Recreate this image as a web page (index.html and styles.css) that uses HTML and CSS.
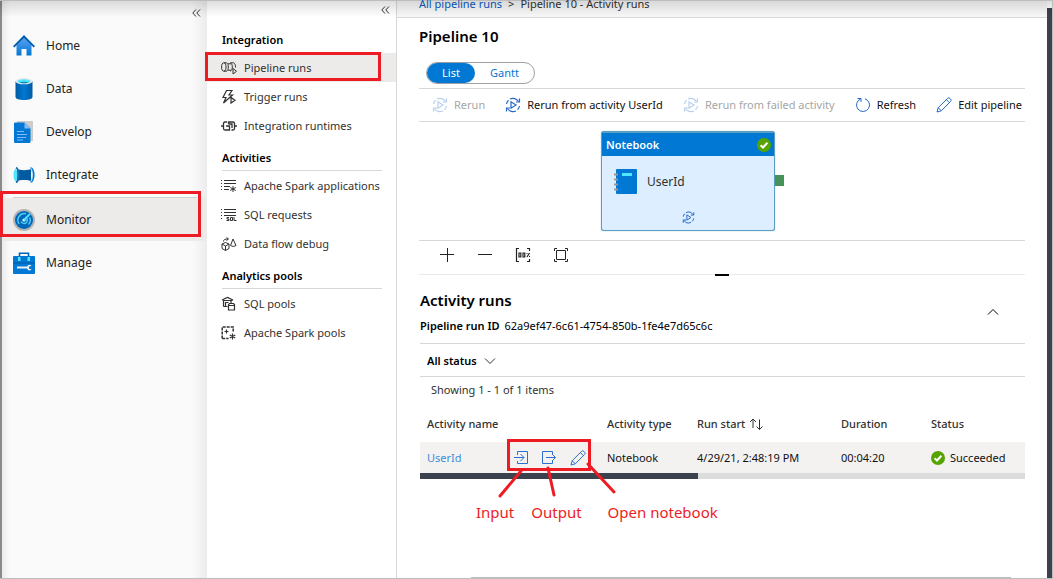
FILE: index.html
```html
<!DOCTYPE html>
<html lang="en">
<head>
<meta charset="utf-8">
<meta name="viewport" content="width=device-width, initial-scale=1">
<title>Pipeline 10 - Activity runs</title>
<link rel="stylesheet" href="styles.css">
</head>
<body>
<svg class="defs" width="0" height="0" aria-hidden="true">
  <defs>
    <linearGradient id="blue" x1="0" y1="0" x2="0" y2="1"><stop offset="0" stop-color="#5ea0ef"/><stop offset="1" stop-color="#0078d4"/></linearGradient>
    <linearGradient id="cyl" x1="0" y1="0" x2="1" y2="0"><stop offset="0" stop-color="#005ba1"/><stop offset=".5" stop-color="#0078d4"/><stop offset="1" stop-color="#005ba1"/></linearGradient>
    <symbol id="rerun" viewBox="0 0 16 16">
      <g fill="none" stroke="currentColor" stroke-width="1.200">
        <path d="M1.500 7A6.600 6.600 0 0 1 3.500 3.200M5 2a6.600 6.600 0 0 1 8.500 2.500M14.500 9a6.600 6.600 0 0 1-2 3.800M11 14a6.600 6.600 0 0 1-8.500-2.500"/>
        <path d="M14.500 1.500v3.500h-3.500M1.500 14.500V11H5"/>
        <path d="M6 4.800v6.400l5-3.200z"/>
      </g>
    </symbol>
    <symbol id="pencil" viewBox="0 0 16 16">
      <path d="M1 15l1.200-4.300L11.600 1.400a1.600 1.600 0 0 1 2.300 0l.7.7a1.600 1.600 0 0 1 0 2.300L5.300 13.800zM10.400 2.600l3 3M2.200 10.700l3.100 3.100" fill="none" stroke="currentColor"/>
    </symbol>
    <symbol id="ok" viewBox="0 0 14 14">
      <circle cx="7" cy="7" r="7" fill="#57a300"/><path d="M3.600 7.200l2.400 2.300 4.400-4.700" fill="none" stroke="#fff" stroke-width="2"/>
    </symbol>
    <symbol id="collapse" viewBox="0 0 9 8"><path d="M4 .5L.8 4 4 7.500M8 .5L4.800 4 8 7.500" fill="none" stroke="currentColor"/></symbol>
  </defs>
</svg>

<div class="app">
  <nav class="hub" aria-label="Hubs">
    <button class="collapse" type="button" aria-label="Collapse hubs"><svg width="9" height="8"><use href="#collapse"/></svg></button>
    <a class="hub-item" href="#">
      <svg width="22" height="22" viewBox="0 0 22 22"><path d="M3.500 10L11 2.500l7.500 7.500v10.500h-5V14h-5v6.500h-5z" fill="url(#blue)"/><path d="M0 11.200L11 0l11 11.200-1.300 1.300L11 3 1.300 12.500z" fill="#0060b0"/></svg>
      <span>Home</span></a>
    <a class="hub-item" href="#">
      <svg width="22" height="22" viewBox="0 0 22 22"><path d="M2.500 3v16c0 1.700 3.800 3 8.500 3s8.500-1.300 8.500-3V3z" fill="url(#cyl)"/><ellipse cx="11" cy="3.200" rx="8.500" ry="3.100" fill="#e8e8e8"/><ellipse cx="11" cy="3.300" rx="6.500" ry="2.100" fill="#50e6ff"/><path d="M6 4.600c2-1.300 8-1.300 10 0-2.500 1-7.500 1-10 0z" fill="#198ab3"/></svg>
      <span>Data</span></a>
    <a class="hub-item" href="#">
      <svg width="22" height="22" viewBox="0 0 22 22"><path d="M4 0h15a1 1 0 0 1 1 1v19H4z" fill="#ccc"/><path d="M2 1.500h9.500l6 6V21a1 1 0 0 1-1 1H2a1 1 0 0 1-1-1V2.500a1 1 0 0 1 1-1z" fill="#0078d4"/><path d="M11.500 1.500l6 6h-6z" fill="#83b9f9"/><path d="M4 10.500h7M4 13.500h10M4 16.500h9M4 19h6" stroke="#83b9f9"/></svg>
      <span>Develop</span></a>
    <a class="hub-item" href="#">
      <svg width="22" height="22" viewBox="0 0 22 22"><path d="M4 5c2 1.500 12 1.500 14 0v12c-2-1.500-12-1.500-14 0z" fill="#005ba1"/><ellipse cx="2.500" cy="11" rx="2" ry="6" fill="#50e6ff"/><path d="M3 3.500c3.500 2 3.500 13 0 15" fill="none" stroke="#1b6fb5" stroke-width="2"/><path d="M17 3.500h2c3.500 3 3.500 12 0 15h-2c3-3 3-12 0-15z" fill="#0078d4"/><path d="M18 4.500c2 3 2 10 0 13" fill="none" stroke="#bde3f5"/></svg>
      <span>Integrate</span></a>
    <div class="hub-current">
      <a class="hub-item active" href="#" aria-current="page">
        <svg width="22" height="22" viewBox="0 0 22 22"><circle cx="11" cy="11" r="11" fill="#b5b5b5"/><circle cx="11" cy="11" r="9" fill="#0067b8"/><path d="M6.200 15A6.500 6.500 0 0 1 13 4.800M16.700 8.500A6.500 6.500 0 0 1 15.500 15.500M8 12.500a3.300 3.300 0 1 0 4.300-4.400" fill="none" stroke="#50c8f5" stroke-width="1.500"/><circle cx="11" cy="11" r="1.600" fill="#fff"/><path d="M11 11l6-6.200" stroke="#50e6ff" stroke-width="1.800"/></svg>
        <span>Monitor</span></a>
      <span class="mark mark-hub"></span>
    </div>
    <a class="hub-item" href="#">
      <svg width="22" height="22" viewBox="0 0 22 22"><path d="M6.500 5V1.200h9V5" fill="none" stroke="#0067b8" stroke-width="1.600"/><rect y="4" width="22" height="18" rx="1" fill="#0078d4"/><path d="M0 11h22" stroke="#005ba1"/><rect x="5" y="5" width="2.500" height="4" fill="#50e6ff"/><rect x="14.500" y="5" width="2.500" height="4" fill="#50e6ff"/><path d="M4 15.500h10" stroke="#e8f2fa" stroke-width="2"/><path d="M18.500 14a2.600 2.600 0 1 0 0 3.200l-2.500-.4v-2.300z" fill="#e8f2fa"/></svg>
      <span>Manage</span></a>
  </nav>

  <nav class="side" aria-label="Monitor">
    <button class="collapse" type="button" aria-label="Collapse menu"><svg width="9" height="8"><use href="#collapse"/></svg></button>
    <h2>Integration</h2>
    <div class="side-current">
      <a class="side-item active" href="#" aria-current="page">
        <svg width="16" height="14" viewBox="0 0 16 14"><path d="M2.800 1.800C1 1.800.6 4 .6 6s.4 4.200 2.200 4.200S5 8 5 6 4.600 1.800 2.800 1.800zM3 1.800h2.500C7 2.500 7.300 4 7.300 6s-.3 3.500-1.800 4.200H3M7 2.800h3M7 9.200h3M9.500 1.800h3C14 2.500 14.500 4 14.500 6.500M9.500 1.800c1.500 1 1.800 2.500 1.800 4.200s-.3 3.200-1.800 4.200M12 7.500v5.500l3.500-2.700z" fill="none" stroke="currentColor"/></svg>
        <span>Pipeline runs</span></a>
      <span class="mark mark-side"></span>
    </div>
    <a class="side-item" href="#">
      <svg width="16" height="14" viewBox="0 0 16 14"><path d="M5.500.5h5.500L8 5h3.500L2.500 13l2.500-5.500H2zM10 7.500v5.500l4-2.700z" fill="none" stroke="currentColor" stroke-width="1.200"/></svg>
      <span>Trigger runs</span></a>
    <a class="side-item" href="#">
      <svg width="16" height="14" viewBox="0 0 16 14"><path d="M0 7h2.500M13.500 7H16M6 3H4a1.500 1.500 0 0 0-1.500 1.500v5A1.500 1.500 0 0 0 4 11h4.500V7H5M7.500 5V3H12a1.500 1.500 0 0 1 1.500 1.500v5A1.500 1.500 0 0 1 12 11h-1.500M7.500 5H11v4" fill="none" stroke="currentColor" stroke-width="1.300"/></svg>
      <span>Integration runtimes</span></a>
    <h2>Activities</h2>
    <a class="side-item" href="#">
      <svg width="16" height="14" viewBox="0 0 16 14"><path d="M0 1.500h1M3 1.500h12M0 4.500h1M3 4.500h12M0 7.500h1M3 7.500h6M0 10.500h1M3 10.500h5M12 7v6M9.200 8.500l5.600 3M14.800 8.500l-5.600 3" fill="none" stroke="currentColor"/></svg>
      <span>Apache Spark applications</span></a>
    <a class="side-item" href="#">
      <svg width="16" height="14" viewBox="0 0 16 14"><path d="M0 1.500h1M3 1.500h12M0 4.500h1M3 4.500h12M0 7.500h1M3 7.500h12M0 10.500h1M8 9.500H6v1.500h2v1.500H5.500M9.500 9.500h2v3h-2zM13 9v3.500h2.500" fill="none" stroke="currentColor"/></svg>
      <span>SQL requests</span></a>
    <a class="side-item" href="#">
      <svg width="16" height="14" viewBox="0 0 16 14"><path d="M1 7l3.500-1.500L8 7v4.500L4.500 13.500 1 11.500zM1 7l3.500 2L8 7M4.500 9v4.500M2.500 4.500C2.500 2.500 4 2 7 2M5.500.5L7.500 2l-2 1.500M12 2l3 6.500-2.800 1-2.700-1z" fill="none" stroke="currentColor"/></svg>
      <span>Data flow debug</span></a>
    <h2>Analytics pools</h2>
    <a class="side-item" href="#">
      <svg width="16" height="14" viewBox="0 0 16 14"><path d="M2.500 9.500v-6M2 3.500h9.500M1 3l5.500-2.500L12 3M4.500 9.500v-4h3M2.500 9.500h4M7.500 13V7.500l1-1h4l1 1V13zM7.500 8.500h6M10 4v2.500" fill="none" stroke="currentColor" stroke-width="1.200"/></svg>
      <span>SQL pools</span></a>
    <a class="side-item" href="#">
      <svg width="16" height="14" viewBox="0 0 16 14"><path d="M1.200 12.500V1h11v5M1.200 12.500H7.500" fill="none" stroke="currentColor" stroke-width="1.500" stroke-dasharray="3 1"/><path d="M5.500 3.500v4M3.500 5.500h4M11.500 7.500v6M8.700 9l5.600 3M14.300 9l-5.600 3" stroke="currentColor" stroke-width="1.200"/></svg>
      <span>Apache Spark pools</span></a>
  </nav>

  <main class="main">
    <div class="crumbs"><a href="#">All pipeline runs</a><span>&gt;</span><span>Pipeline 10 - Activity runs</span></div>
    <div class="content">
      <h1>Pipeline 10</h1>
      <div class="toggle"><button class="on" type="button">List</button><button type="button">Gantt</button></div>
      <div class="toolbar">
        <button type="button" disabled><svg width="16" height="16"><use href="#rerun"/></svg>Rerun</button>
        <button type="button"><svg width="16" height="16"><use href="#rerun"/></svg>Rerun from activity UserId</button>
        <button type="button" disabled><svg width="16" height="16"><use href="#rerun"/></svg>Rerun from failed activity</button>
        <button type="button"><svg width="16" height="16" viewBox="0 0 16 16"><path d="M10 1.800a6.500 6.500 0 1 1-4.500.2M2.500 1.500h3.500V5" fill="none" stroke="currentColor"/></svg>Refresh</button>
        <button type="button"><svg width="16" height="16"><use href="#pencil"/></svg>Edit pipeline</button>
      </div>

      <div class="canvas">
        <div class="node">
          <div class="node-head"><span>Notebook</span><svg width="14" height="14"><use href="#ok"/></svg></div>
          <div class="node-body"><svg width="23" height="25" viewBox="0 0 23 25"><rect x="2" width="21" height="25" rx="1" fill="#0078d4"/><rect x="8" y="4" width="10" height="3" fill="#50e6ff"/><path d="M0 5.500h4M0 10.500h4M0 15.500h4M0 20.500h4" stroke="#999" stroke-width="2"/></svg><span>UserId</span></div>
          <button class="node-run" type="button" aria-label="Rerun activity"><svg width="13" height="13"><use href="#rerun"/></svg></button>
          <span class="port"></span>
        </div>
      </div>
      <div class="zoombar">
        <button type="button" aria-label="Zoom in"><svg width="16" height="16" viewBox="0 0 16 16"><path d="M8.500 1v14M1 7.500h14" stroke="currentColor"/></svg></button>
        <button type="button" aria-label="Zoom out"><svg width="16" height="16" viewBox="0 0 16 16"><path d="M1 7.500h14" stroke="currentColor"/></svg></button>
        <button type="button" aria-label="Zoom to 100%"><svg width="16" height="16" viewBox="0 0 16 16"><path d="M4 1.500H1.500v13H4M12 1.500h2.500V4M14.500 12v2.500H12" fill="none" stroke="currentColor" stroke-width="1.200"/><path d="M4 6h1.800v4H4zM8 6h1.800v4H8zM11.500 6.500h1M14.500 6l-2.500 4M14 9.500h1" fill="none" stroke="currentColor" stroke-width="1.200"/></svg></button>
        <button type="button" aria-label="Zoom to fit"><svg width="16" height="16" viewBox="0 0 16 16"><path d="M1.500 4V1.500H4M12 1.500h2.500V4M14.500 12v2.500H12M4 14.500H1.500V12M3.500 3.500h9v9h-9z" fill="none" stroke="currentColor"/></svg></button>
        <span class="grip"></span>
      </div>

      <section class="runs">
        <div class="runs-head">
          <div><h2>Activity runs</h2><p><b>Pipeline run ID</b> <span>62a9ef47-6c61-4754-850b-1fe4e7d65c6c</span></p></div>
          <button type="button" aria-label="Collapse activity runs"><svg width="12" height="8" viewBox="0 0 12 8"><path d="M1 6.500l5-5 5 5" fill="none" stroke="currentColor"/></svg></button>
        </div>
        <div class="filter">
          <select aria-label="Status filter"><option>All status</option></select>
          <svg width="12" height="8" viewBox="0 0 12 8"><path d="M1 1.500l5 5 5-5" fill="none" stroke="currentColor"/></svg>
        </div>
        <p class="count">Showing 1 - 1 of 1 items</p>
        <table>
          <colgroup><col class="c-name"><col class="c-type"><col class="c-start"><col class="c-type"><col></colgroup>
          <thead><tr><th>Activity name</th><th>Activity type</th><th><div class="sort">Run start <svg width="14" height="12" viewBox="0 0 14 12"><path d="M4 10V1M1 4l3-3 3 3M10.500 1.500v10M7.500 8.500l3 3 3-3" fill="none" stroke="currentColor"/></svg></div></th><th>Duration</th><th>Status</th></tr></thead>
          <tbody><tr>
            <td><div class="name"><a href="#">UserId</a>
              <div class="actions">
                <button type="button" aria-label="Input"><svg width="16" height="16" viewBox="0 0 16 16"><path d="M3.500 5V1.500h10v12h-10V11M0 7.500h10M6.500 4L10 7.500 6.500 11" fill="none" stroke="currentColor"/></svg></button>
                <button type="button" aria-label="Output"><svg width="16" height="16" viewBox="0 0 16 16"><path d="M10.500 4V1.500h-10v12h10V11M4 7.500h9.500M10 4l3.500 3.500L10 11" fill="none" stroke="currentColor"/></svg></button>
                <button type="button" aria-label="Open notebook"><svg width="16" height="16"><use href="#pencil"/></svg></button>
                <span class="mark mark-actions"></span>
                <div class="callouts">
                  <svg width="120" height="38" viewBox="0 0 120 38"><path d="M7 7L-14 32M34 4l6 27M74 0l26 28" stroke="#ed1c24" stroke-width="3" stroke-linecap="round" fill="none"/></svg>
                  <div class="callout-text"><span>Input</span><span>Output</span><span>Open notebook</span></div>
                </div>
              </div></div></td>
            <td>Notebook</td><td>4/29/21, 2:48:19 PM</td><td>00:04:20</td>
            <td><div class="status"><svg width="14" height="14"><use href="#ok"/></svg>Succeeded</div></td>
          </tr></tbody>
        </table>
        <div class="hscroll"><div></div></div>
      </section>
    </div>
    <div class="bottom-line"></div>
  </main>
  <div class="vscroll"></div>
</div>
</body>
</html>
```
FILE: styles.css
```css
* { box-sizing: border-box; }
body { margin: 0; font: 11px/16px "Noto Sans", "Open Sans", sans-serif; color: #323130; background: #fff; }
button, select { font: inherit; color: inherit; background: none; border: 0; padding: 0; margin: 0; }
button { display: inline-flex; align-items: center; }
a { color: inherit; text-decoration: none; }
h1, h2, p { margin: 0; }
svg { flex: none; overflow: visible; }
.defs { position: absolute; }

.app { position: relative; display: flex; min-height: 100vh; border: 1px solid #bdbdbd; border-left: 0; }
.app::before { content: ""; position: absolute; inset: 0 0 auto; height: 16px; background: linear-gradient(rgba(0,0,0,.13), rgba(0,0,0,0)); pointer-events: none; z-index: 2; }
.collapse { align-self: flex-end; height: 24px; color: #323130; }

.hub { flex: 0 0 207px; display: flex; flex-direction: column; border-left: 2px solid #8a8a8a; background: linear-gradient(90deg, #ececec, #fafafa 8px, #fafafa 190px, #ececec); }
.hub .collapse { height: 23px; margin-right: 6px; }
.hub-item { display: flex; align-items: center; gap: 11px; height: 43px; padding-left: 11px; font-size: 12px; color: #222; }
.hub-item.active, .side-item.active { background: #edebe9; }
.hub-current { position: relative; padding-top: 1px; margin-top: 1px; background: linear-gradient(#d2d0ce, #d2d0ce) 11px 0 / 184px 1px no-repeat; }
.mark { position: absolute; border: 3px solid #ed1c24; pointer-events: none; }
.mark-hub { inset: -6px 6px 4px -2px; }

.side { flex: 0 0 190px; display: flex; flex-direction: column; border-right: 1px solid #d8d8d8; background: #fff; }
.side .collapse { height: 21px; margin: -2px 6px 0 0; }
.side h2 { height: 31px; margin: 0 14px 0 15px; padding-top: 10px; font-size: 11px; font-weight: 600; color: #000; border-bottom: 1px solid #d8d8d8; }
.side .collapse + h2 { margin-top: 2px; }
.side-item { display: flex; align-items: center; gap: 7px; height: 29px; padding-left: 14px; white-space: nowrap; }
.side-current { position: relative; }
.mark-side { inset: -1px 15px 1px -2px; }

.main { flex: 1; min-width: 0; display: flex; flex-direction: column; }
.crumbs { display: flex; gap: 6px; height: 17px; padding-left: 22px; border-bottom: 1px solid #d8d8d8; background: #f8f8f8; line-height: 6px; }
.crumbs a { color: #0b5bc4; }
.content { flex: 1; padding: 0 22px; }
h1 { padding: 7px 0 15px; font-size: 15px; line-height: 22px; font-weight: 600; color: #000; }
.toggle { display: inline-flex; margin-left: 7px; height: 22px; border: 1px solid #a0a0a0; border-radius: 11px; vertical-align: top; color: #0078d4; }
.toggle button { width: 59px; justify-content: center; }
.toggle .on { width: 48px; border-radius: 10px; background: #0078d4; color: #fff; }
.toolbar { display: flex; justify-content: space-between; height: 34px; margin-top: 4px; padding: 0 3px 0 13px; border: solid #d8d8d8; border-width: 1px 0; color: #111; white-space: nowrap; }
.toolbar button { gap: 6px; }
.toolbar svg { color: #2468c8; }
.toolbar button:disabled { color: #a6a6a6; }
.toolbar button:disabled svg { color: #b9cfee; }

.canvas { position: relative; height: 118px; }
.node { position: absolute; left: 182px; top: 9px; width: 174px; height: 100px; border: 1px solid #5b9fc0; border-top-width: 2px; border-radius: 3px; background: #dceeff; box-shadow: 0 0 1px #5b9fc0; }
.node-head { display: flex; align-items: center; justify-content: space-between; height: 23px; padding: 0 3px 0 4px; background: #0078d4; color: #fff; font-weight: 600; }
.node-body { display: flex; align-items: center; gap: 10px; height: 51px; padding-left: 12px; font-size: 12px; }
.node-run { display: flex; margin: 4px auto 0; color: #2468c8; }
.port { position: absolute; right: -10px; top: 42px; width: 9px; height: 11px; background: #46935a; }
.zoombar { position: relative; display: flex; gap: 22px; height: 35px; padding: 0 0 6px 20px; border: solid #d8d8d8; border-width: 1px 0; border-bottom-color: #ebebeb; color: #222; }
.grip { position: absolute; left: calc(50% - 7px); bottom: -2px; width: 14px; height: 2px; background: #000; }

.runs { padding-left: 1px; }
.runs-head { display: flex; justify-content: space-between; align-items: center; height: 69px; padding: 5px 26px 0 0; border-bottom: 1px solid #d8d8d8; color: #000; }
.runs-head h2 { font-size: 15px; line-height: 22px; font-weight: 600; }
.runs-head p { margin-top: 7px; }
.runs-head b { font-weight: 600; margin-right: 2px; }
.filter { display: grid; justify-content: start; align-items: center; height: 33px; padding: 2px 0 0 7px; border-bottom: 1px solid #d8d8d8; }
.filter > * { grid-area: 1 / 1; }
.filter select { appearance: none; padding-right: 19px; color: #000; font-weight: 600; }
.filter svg { justify-self: end; pointer-events: none; }
.count { padding: 5px 11px; }
table { width: 100%; table-layout: fixed; border-collapse: collapse; white-space: nowrap; }
th, td { padding: 0 0 0 7px; text-align: left; font-weight: 400; }
th { height: 39px; padding-top: 2px; font-weight: 500; }
.sort { display: flex; align-items: center; gap: 4px; }
td { height: 31px; background: #f3f2f1; color: #111; }
.c-name { width: 180px; } .c-type { width: 90px; } .c-start { width: 144px; }
.name { display: flex; align-items: center; justify-content: space-between; padding-right: 14px; }
.name a { color: #3a8fd6; }
.actions { position: relative; display: flex; gap: 12px; color: #2b6fd0; }
.mark-actions { inset: -11px -5px -5px -7px; }
.callouts { position: absolute; left: 0; top: 14px; color: #ed1c24; font-size: 15px; line-height: 20px; pointer-events: none; }
.callouts > svg { display: block; }
.callout-text { display: flex; margin-left: -38px; }
.callout-text span:nth-child(2) { margin: 0 26px 0 17px; }
.status { display: flex; align-items: center; gap: 5px; }
.hscroll { height: 6px; background: #dcdcdc; }
.hscroll div { width: 46%; height: 6px; background: #3b424d; }
.bottom-line { height: 1px; margin: 0 36px 0 74px; background: #bdbdbd; }
.vscroll { flex: 0 0 5px; margin-top: 7px; background: #3b424d; }
```
